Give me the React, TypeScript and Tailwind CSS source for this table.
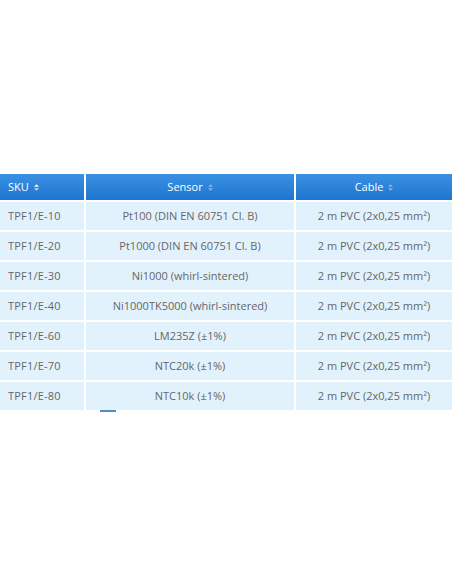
import * as React from "react"

const rows = [
    { sku: "TPF1/E-10", sensor: "Pt100 (DIN EN 60751 Cl. B)", cable: "2 m PVC (2x0,25 mm²)" },
    { sku: "TPF1/E-20", sensor: "Pt1000 (DIN EN 60751 Cl. B)", cable: "2 m PVC (2x0,25 mm²)" },
    { sku: "TPF1/E-30", sensor: "Ni1000 (whirl-sintered)", cable: "2 m PVC (2x0,25 mm²)" },
    { sku: "TPF1/E-40", sensor: "Ni1000TK5000 (whirl-sintered)", cable: "2 m PVC (2x0,25 mm²)" },
    { sku: "TPF1/E-60", sensor: "LM235Z (±1%)", cable: "2 m PVC (2x0,25 mm²)" },
    { sku: "TPF1/E-70", sensor: "NTC20k (±1%)", cable: "2 m PVC (2x0,25 mm²)" },
    { sku: "TPF1/E-80", sensor: "NTC10k (±1%)", cable: "2 m PVC (2x0,25 mm²)" },
]

function SortIcon({ active = false }: { active?: boolean }) {
    return (
        <svg width="5" height="7" viewBox="0 0 6 8" className="ml-[5px] inline-block">
            <path d="M3 0 L6 3 L0 3 Z" fill={active ? "#ffffff" : "#7fb8ec"} />
            <path d="M3 8 L6 5 L0 5 Z" fill={active ? "#b9dcf8" : "#7fb8ec"} />
        </svg>
    )
}

export default function App() {
    return (
        <div className="w-[452px] h-[584px] bg-white pt-[174px] font-['Open_Sans',sans-serif] text-[11px]">
            <div className="grid grid-cols-[84px_208px_156px] gap-[2px]">
                {/* header */}
                <div className="h-[26px] flex items-center pl-[8px] text-white bg-gradient-to-b from-[#3a91e3] to-[#1f74cf]">
                    SKU<SortIcon active />
                </div>
                <div className="h-[26px] flex items-center justify-center text-white bg-gradient-to-b from-[#3a91e3] to-[#1f74cf]">
                    Sensor<SortIcon />
                </div>
                <div className="h-[26px] flex items-center justify-center text-white bg-gradient-to-b from-[#3a91e3] to-[#1f74cf]">
                    Cable<SortIcon />
                </div>

                {rows.map((r) => (
                    <React.Fragment key={r.sku}>
                        <div className="h-[28px] flex items-center pl-[8px] bg-[#e2f2fd] text-[#666666] tracking-[0.2px]">{r.sku}</div>
                        <div className="h-[28px] flex items-center justify-center bg-[#e2f2fd] text-[#666666]">{r.sensor}</div>
                        <div className="h-[28px] flex items-center justify-center bg-[#e2f2fd] text-[#666666]">{r.cable}</div>
                    </React.Fragment>
                ))}
            </div>
            <div className="ml-[100px] w-[16px] h-[2px] bg-[#4f8fc0]" />
        </div>
    )
}
